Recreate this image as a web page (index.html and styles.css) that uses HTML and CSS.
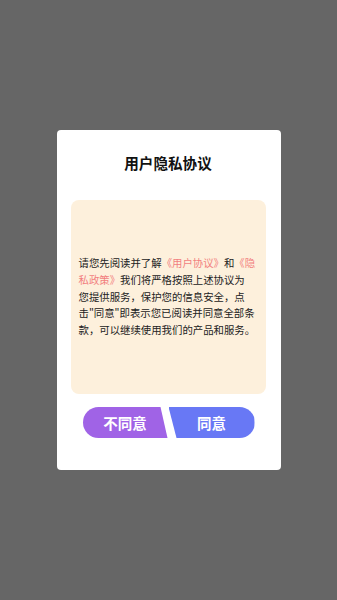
FILE: index.html
```html
<!DOCTYPE html>
<html lang="zh-CN">
<head>
    <meta charset="UTF-8">
    <meta name="viewport" content="width=device-width, initial-scale=1.0">
    <title>用户隐私协议</title>
    <link rel="stylesheet" href="styles.css">
</head>
<body>
    <div class="dialog">
        <h1 class="title">用户隐私协议</h1>
        <div class="content">
            <p>请您先阅读并了解<span class="link">《用户协议》</span>和<span class="link">《隐私政策》</span>我们将严格按照上述协议为<br>您提供服务，保护您的信息安全，点击"同意"即表示您已阅读并同意全部条款，可以继续使用我们的产品和服务。</p>
        </div>
        <div class="actions">
            <button class="btn refuse">不同意</button>
            <button class="btn agree">同意</button>
        </div>
    </div>
</body>
</html>
```

FILE: styles.css
```css
* {
    margin: 0;
    padding: 0;
    box-sizing: border-box;
    font-family: "Noto Sans CJK SC", "Noto Sans", sans-serif;
}

body {
    background: #666666;
    min-height: 100vh;
    display: flex;
    justify-content: center;
    align-items: center;
}

.dialog {
    width: 224px;
    height: 340px;
    background: #fff;
    border-radius: 4px;
    padding: 23px 15px 0 14px;
}

.title {
    font-size: 14.6px;
    font-weight: bold;
    line-height: 20px;
    text-align: center;
    color: #111;
    margin-bottom: 27px;
}

.content {
    height: 194px;
    background: #fdf0dc;
    border-radius: 8px;
    display: flex;
    align-items: center;
    padding: 0 8px;
}

.content p {
    font-size: 10.4px;
    line-height: 16.75px;
    color: #222;
}

.link {
    color: #f27f7f;
}

/* Buttons */
.actions {
    display: flex;
    justify-content: center;
    gap: 1px;
    margin-top: 13px;
    padding-left: 1px;
}

.btn {
    height: 31px;
    border: none;
    color: #fff;
    font-size: 14.5px;
    font-weight: bold;
    cursor: pointer;
}

.refuse {
    width: 85px;
    background: #a063e6;
    border-radius: 16px 0 0 16px;
    clip-path: polygon(0 0, calc(100% - 7px) 0, 100% 100%, 0 100%);
}

.agree {
    width: 86px;
    background: #6878f5;
    border-radius: 0 16px 16px 0;
    clip-path: polygon(0 0, 100% 0, 100% 100%, 8px 100%);
}
```
